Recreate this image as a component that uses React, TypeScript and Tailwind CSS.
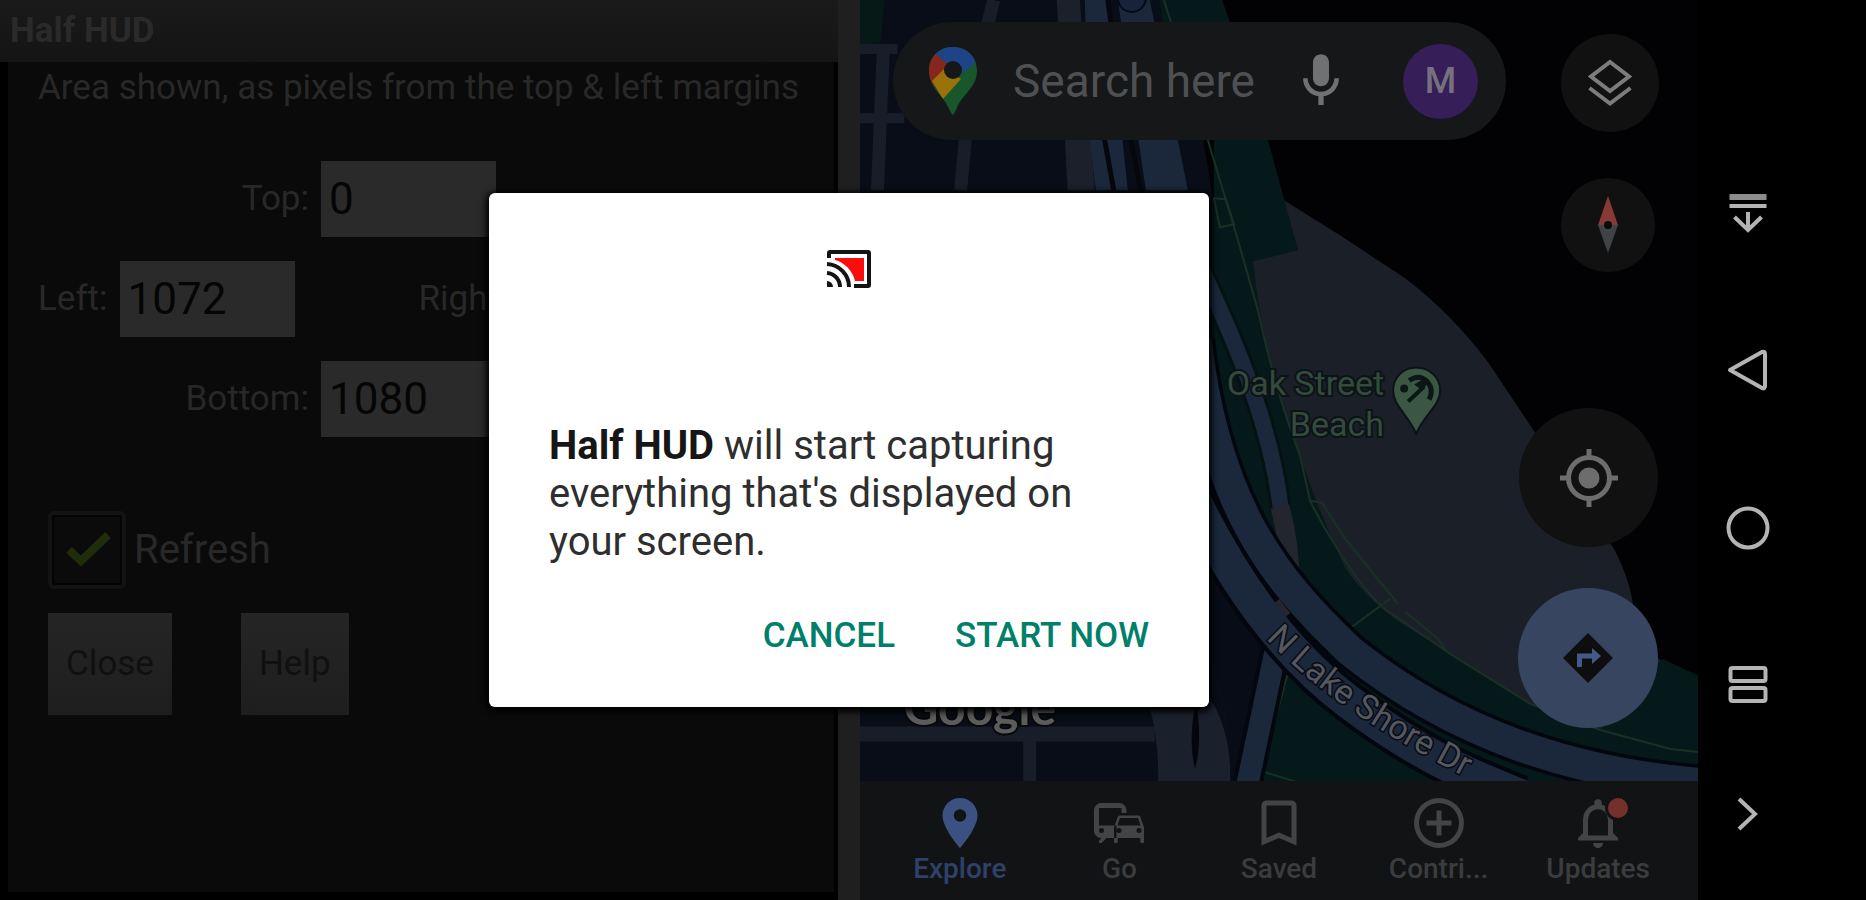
import type { ReactNode } from 'react';

type Tab = {
  label: string;
  icon: ReactNode;
  active?: boolean;
};

const tabs: Tab[] = [
  {
    label: 'Explore',
    active: true,
    icon: (
      <path
        fillRule="evenodd"
        d="M12 2C8.13 2 5 5.13 5 9c0 5.25 7 13 7 13s7-7.75 7-13c0-3.87-3.13-7-7-7zm0 9.5a2.5 2.5 0 0 1 0-5 2.5 2.5 0 0 1 0 5z"
      />
    ),
  },
  {
    label: 'Go',
    icon: (
      <path
        fillRule="evenodd"
        d="M12 4H5C3.34 4 2 5.34 2 7v8c0 1.66 1.34 3 3 3l-1 1v1h1l2-2h4v-5H4V6h9v2h2V7c0-1.66-1.34-3-3-3zM5 14a1 1 0 1 1 0 2 1 1 0 0 1 0-2zm15.57-4.34c-.14-.4-.52-.66-.97-.66h-7.19c-.46 0-.83.26-.98.66L10 13.77V19.5c0 .28.22.5.5.5h.5c.28 0 .5-.22.5-.5V18h9v1.5c0 .28.22.5.5.5h.5c.28 0 .5-.22.5-.5v-5.73l-1.43-4.11zm-8.16.34h7.19l1.03 3h-9.25l1.03-3zM12 16a1 1 0 1 1 0-2 1 1 0 0 1 0 2zm8 0a1 1 0 1 1 0-2 1 1 0 0 1 0 2z"
      />
    ),
  },
  {
    label: 'Saved',
    icon: <path d="M17 3H7c-1.1 0-2 .9-2 2v16l7-3 7 3V5c0-1.1-.9-2-2-2zm0 15-5-2.18L7 18V5h10v13z" />,
  },
  {
    label: 'Contri...',
    icon: (
      <path d="M13 7h-2v4H7v2h4v4h2v-4h4v-2h-4V7zm-1-5a10 10 0 1 0 0 20 10 10 0 0 0 0-20zm0 18a8 8 0 1 1 0-16 8 8 0 0 1 0 16z" />
    ),
  },
  {
    label: 'Updates',
    icon: (
      <>
        <path d="M12 22c1.1 0 2-.9 2-2h-4c0 1.1.9 2 2 2zm6-6v-5c0-3.07-1.63-5.64-4.5-6.32V4a1.5 1.5 0 0 0-3 0v.68C7.64 5.36 6 7.92 6 11v5l-2 2v1h16v-1l-2-2zm-2 1H8v-6c0-2.48 1.51-4.5 4-4.5s4 2.02 4 4.5v6z" />
        <circle cx="20" cy="6" r="5.2" className="fill-[#121315]" />
        <circle cx="20" cy="6" r="4" className="fill-[#74302a]" />
      </>
    ),
  },
];

const fieldClass =
  'h-[76px] w-[175px] bg-[#2a2a2a] px-2 text-[44px] leading-none text-[#050505] outline-none';

function Field({ id, label, value }: { id: string; label: string; value: string }) {
  return (
    <div className="flex items-center gap-3">
      <label htmlFor={id}>{label}</label>
      <input id={id} type="text" defaultValue={value} className={fieldClass} />
    </div>
  );
}

function SettingsPane() {
  return (
    <section className="flex min-w-0 flex-col bg-black">
      <h1 className="bg-linear-to-b from-[#1a1a1a] to-[#141414] px-[10px] py-3 text-[35px] leading-[38px] font-bold text-[#2a2a2a]">
        Half HUD
      </h1>
      <div className="mr-1 mb-2 ml-2 flex-1 bg-[#0a0a0a] pl-[30px] text-[35px] leading-9 text-[#282828]">
        <p className="pt-2 whitespace-nowrap">Area shown, as pixels from the top &amp; left margins</p>
        <div className="mt-[55px] flex w-[458px] flex-col gap-6">
          <div className="flex justify-end">
            <Field id="top" label="Top:" value="0" />
          </div>
          <div className="flex w-[720px] gap-[124px]">
            <Field id="left" label="Left:" value="1072" />
            <Field id="right" label="Right:" value="1920" />
          </div>
          <div className="flex justify-end">
            <Field id="bottom" label="Bottom:" value="1080" />
          </div>
        </div>
        <div className="mt-[74px] ml-[10px] flex items-center gap-2">
          <span className="relative flex size-[78px]">
            <input
              id="refresh"
              type="checkbox"
              defaultChecked
              className="size-full appearance-none rounded-md border-4 border-[#131313] bg-[#0b0b0c] outline-2 -outline-offset-6 outline-[#040404]"
            />
            <svg viewBox="0 0 78 78" className="pointer-events-none absolute inset-0 size-full">
              <path d="M21 39 33 50 60 24" fill="none" stroke="#202d0a" strokeWidth="8" />
            </svg>
          </span>
          <label htmlFor="refresh" className="text-[40px]">
            Refresh
          </label>
        </div>
        <div className="mt-6 ml-[10px] flex gap-[69px] text-[#101010]">
          <button type="button" className="h-[102px] bg-linear-to-b from-[#252525] to-[#1e1e1e] px-[18px]">
            Close
          </button>
          <button type="button" className="h-[102px] bg-linear-to-b from-[#252525] to-[#1e1e1e] px-[18px]">
            Help
          </button>
        </div>
      </div>
    </section>
  );
}

function MapCanvas() {
  return (
    <svg
      viewBox="860 0 838 780"
      preserveAspectRatio="xMidYMid slice"
      className="absolute inset-0 size-full"
      fill="none"
    >
      <rect x="860" width="838" height="782" fill="#020204" />
      {/* city blocks */}
      <path d="M860 0H1180L1230 300 1300 600 1500 782H860Z" fill="#080d17" />
      <path d="M860 0H885L881 42 860 46Z" fill="#071916" />
      {/* beach */}
      <path
        d="M1240 190 1284 200 1340 235 1405 278Q1450 312 1488 362L1530 425 1560 470 1613 547Q1636 590 1634 630L1662 662 1640 740H1500L1300 600 1240 300Z"
        fill="#1a1f28"
      />
      {/* lakefront park */}
      <path
        d="M1160 0H1222L1250 75 1268 140 1298 250 1253 261 1258 300Q1272 385 1300 455 1318 510 1345 567 1365 597 1400 622L1450 653 1530 703 1600 728 1662 658 1698 675V782H1440L1300 620 1214 420V140H1180Z"
        fill="#06191a"
      />
      <path
        d="M1164 0 1172 25 1208 140 1238 240 1258 310Q1275 390 1300 455L1310 500Q1322 525 1345 560 1365 590 1383 607L1450 653 1530 703 1600 729 1670 748 1698 751M1310 500 1322 502 1345 538 1383 585 1398 603M1405 611 1438 638 1446 650M1352 626 1390 598M1214 198 1226 199 1234 224 1220 227Z"
        stroke="#1a3024"
        strokeWidth="2"
      />
      {/* street grid */}
      <g stroke="#181e29">
        <path d="M860 49H898M860 118H905" strokeWidth="10" />
        <path d="M884 44 878 190M994 0 988 25M966 135 961 190" strokeWidth="13" />
        <path d="M860 733H1155" strokeWidth="15" />
        <path d="M1030 738V782" strokeWidth="13" />
      </g>
      <path d="M1057 0H1080L1095 190H1068Z" fill="#1b202b" />
      <path d="M1085 0H1108L1128 190H1096L1090 140Z" fill="#1b273b" />
      <path d="M1118 0H1150L1188 190H1146Z" fill="#1b273b" />
      <path d="M1104 135 1114 190M1130 135 1142 195M1108 0 1111 22" stroke="#05070d" strokeWidth="5" />
      <circle cx="1132" cy="-2" r="14" fill="#16233a" stroke="#070a14" strokeWidth="2" />
      <path d="M1148 700H1212Q1232 735 1230 782H1158Q1160 740 1148 700Z" fill="#1a212d" />
      <path d="M1196 700Q1188 740 1195 768 1203 740 1196 700Z" fill="#04060c" />
      <path d="M1214 570 1280 655 1236 782H1231Q1232 710 1214 660Z" fill="#070c16" />
      {/* green wedge under the drive */}
      <path d="M1289 664 1258 782H1470L1380 735Z" fill="#06191a" />
      <path d="M1289 668 1261 770 1300 782" stroke="#16321f" strokeWidth="2" />
      {/* ramps */}
      <path d="M1276 648 1246 790" stroke="#04070e" strokeWidth="30" />
      <path d="M1276 648 1246 790" stroke="#1b273b" strokeWidth="22" />
      <path d="M1202 270C1240 350 1272 430 1281 510" stroke="#051211" strokeWidth="22" />
      <path d="M1202 270C1240 350 1272 430 1281 510" stroke="#1b273b" strokeWidth="16" />
      <path d="M1280 506Q1290 545 1290 580" stroke="#24262d" strokeWidth="19" />
      {/* N Lake Shore Dr carriageways */}
      <path
        d="M1196 340C1215 500 1270 575 1350 650 1450 730 1570 775 1720 784"
        stroke="#03060c"
        strokeWidth="38"
      />
      <path
        d="M1180 470C1225 570 1280 650 1350 702 1420 755 1470 775 1520 795"
        stroke="#03060c"
        strokeWidth="42"
      />
      <path
        d="M1196 340C1215 500 1270 575 1350 650 1450 730 1570 775 1720 784"
        stroke="#1b273b"
        strokeWidth="31"
      />
      <path
        d="M1180 470C1225 570 1280 650 1350 702 1420 755 1470 775 1520 795"
        stroke="#1b273b"
        strokeWidth="34"
      />
      <path d="M1277 600 1288 614" stroke="#24262d" strokeWidth="6" />
      <path id="drive" d="M1266 638C1310 684 1370 730 1500 794" />
      <text
        fill="#55575e"
        stroke="#080b14"
        strokeWidth="3"
        paintOrder="stroke"
        fontSize="34"
        fontFamily="Roboto, sans-serif"
      >
        <textPath href="#drive">N Lake Shore Dr</textPath>
      </text>
      <g
        fill="#344a3c"
        stroke="#0c1316"
        strokeWidth="4"
        paintOrder="stroke"
        fontSize="34"
        fontFamily="Roboto, sans-serif"
        textAnchor="end"
      >
        <text x="1384" y="394">
          Oak Street
        </text>
        <text x="1384" y="435">
          Beach
        </text>
      </g>
      <path
        d="M1416 367c-13 0-23 10-23 23 0 15 14 23 23 43 9-20 24-28 24-43 0-13-11-23-24-23z"
        fill="#3b5744"
        stroke="#0c1316"
        strokeWidth="2"
      />
      {/* beach umbrella */}
      <path d="M1408 401 1424 386" stroke="#0c1715" strokeWidth="4" />
      <path d="M1409 380Q1419 373 1427 381 1434 389 1429 399" stroke="#0c1715" strokeWidth="5" />
      <path d="M1414 384 1424 378 1428 382 1422 390" fill="#0c1715" />
      <circle cx="1404" cy="388" r="4" fill="#0c1715" />
      <text
        x="904"
        y="724"
        fill="#5c5c5c"
        stroke="#08090c"
        strokeWidth="4"
        paintOrder="stroke"
        fontSize="48"
        fontWeight="700"
        fontFamily="Lato, sans-serif"
      >
        Google
      </text>
    </svg>
  );
}

function MapPane() {
  return (
    <section className="flex min-w-0 flex-col">
      <div className="relative flex-1 overflow-hidden">
        <MapCanvas />
        <div className="relative flex justify-between gap-12 pt-[22px] pr-[39px] pl-[33px]">
          <div className="flex h-[118px] max-w-[613px] flex-1 items-center rounded-full bg-[#161718] pr-7 pl-9">
            <svg viewBox="0 0 48 68" className="h-[68px] w-12 shrink-0">
              <defs>
                <clipPath id="pin">
                  <path d="M24 0C10 0 0 10 0 24c0 12 8 20 14 28 5 6 8 15 10 16 2-1 4-10 9-16 7-9 15-16 15-28C48 10 38 0 24 0z" />
                </clipPath>
              </defs>
              <g clipPath="url(#pin)">
                <path d="M0 0h48v68H0z" fill="#17572b" />
                <path d="M0 0H48V14L24 34 4 8Z" fill="#1c4486" />
                <path d="M0 4 8 8 24 22 4 40-4 30Z" fill="#86261f" />
                <path d="M3 34 16 21 32 32 14 52Z" fill="#99720a" />
              </g>
              <circle cx="24" cy="23" r="9" fill="#161718" />
            </svg>
            <input
              type="text"
              aria-label="Search here"
              placeholder="Search here"
              className="ml-9 w-0 flex-1 text-[46px] text-[#4f5052] outline-none placeholder:text-[#4f5052]"
            />
            <button type="button" aria-label="Voice search" className="mr-[50px] shrink-0">
              <svg viewBox="0 0 24 24" className="size-16 fill-[#707173]">
                <path d="M12 14c1.66 0 3-1.34 3-3V5c0-1.66-1.34-3-3-3S9 3.34 9 5v6c0 1.66 1.34 3 3 3zm5-3a5 5 0 0 1-10 0H5.3a6.7 6.7 0 0 0 5.7 6.72V21h2v-3.28A6.7 6.7 0 0 0 18.7 11H17z" />
              </svg>
            </button>
            <button
              type="button"
              className="size-[75px] shrink-0 rounded-full bg-[#361e58] text-[36px] font-medium text-[#77717f]"
            >
              M
            </button>
          </div>
          <div className="flex flex-col gap-[46px] pt-3">
            <button
              type="button"
              aria-label="Layers"
              className="flex size-[98px] items-center justify-center rounded-full bg-[#111112]"
            >
              <svg viewBox="0 0 44 48" className="h-12 w-11 fill-none stroke-[#7b7c7e] stroke-[4]">
                <path d="M22 3 41 17.5 22 32 3 17.5Z" />
                <path d="M1.5 29 22 44.5 42.5 29" />
              </svg>
            </button>
            <button
              type="button"
              aria-label="Compass"
              className="flex size-[94px] items-center justify-center rounded-full bg-[#111112]"
            >
              <svg viewBox="0 0 24 60" className="h-[60px] w-6">
                <path d="M12 1 22 30H2Z" fill="#863a33" />
                <path d="M2 30H22L12 58Z" fill="#3f4346" />
                <circle cx="12" cy="30" r="4" fill="#0b0b0c" />
              </svg>
            </button>
          </div>
        </div>
        <div className="relative mt-[136px] flex flex-col items-end gap-[41px] pr-10">
          <button
            type="button"
            aria-label="My location"
            className="flex size-[139px] items-center justify-center rounded-full bg-[#111112]"
          >
            <svg viewBox="0 0 58 58" className="size-[58px]">
              <circle cx="29" cy="29" r="20.5" fill="none" stroke="#6d6d6e" strokeWidth="5" />
              <circle cx="29" cy="29" r="10.5" fill="#6d6d6e" />
              <path d="M29 0V9M29 49V58M0 29H9M49 29H58" stroke="#6d6d6e" strokeWidth="5" />
            </svg>
          </button>
          <button
            type="button"
            aria-label="Directions"
            className="flex size-[140px] items-center justify-center rounded-full bg-[#384560]"
          >
            <svg viewBox="0 0 50 50" className="size-[50px]">
              <path d="M25 0 50 25 25 50 0 25Z" fill="#0f0e0f" />
              <path d="M16.5 34V23H32" fill="none" stroke="#435a86" strokeWidth="5" />
              <path d="M29 15 38 23 29 31Z" fill="#435a86" />
            </svg>
          </button>
        </div>
      </div>
      <nav className="grid h-[119px] grid-cols-5 bg-[#121315] px-5">
        {tabs.map((tab) => (
          <a
            key={tab.label}
            href="#"
            className={`flex flex-col items-center pt-3 text-[28px] leading-8 font-medium ${
              tab.active ? 'text-[#2e4169]' : 'text-[#3b3c3e]'
            }`}
          >
            <svg
              viewBox="0 0 24 24"
              className={`size-[60px] overflow-visible ${tab.active ? 'fill-[#3a5182]' : 'fill-[#434446]'}`}
            >
              {tab.icon}
            </svg>
            {tab.label}
          </a>
        ))}
      </nav>
    </section>
  );
}

const systemKeys = [
  {
    label: 'Hide navigation bar',
    icon: (
      <>
        <path d="M3.5 7H40.500" strokeWidth="6" className="stroke-[#8c8c8c]" />
        <path d="M3.5 16H40.500M22 22V38M8.500 27 22 40 35.500 27" />
      </>
    ),
  },
  { label: 'Back', icon: <path strokeLinejoin="round" d="M4 22 36 4Q39 3 39 6V38Q39 41 36 40Z" /> },
  { label: 'Home', icon: <circle cx="22" cy="22" r="19.5" /> },
  {
    label: 'Split screen',
    icon: (
      <>
        <rect x="4.5" y="4" width="35" height="13" rx="2" />
        <rect x="4.5" y="24" width="35" height="13" rx="2" />
      </>
    ),
  },
];

function SystemBar() {
  return (
    <aside className="flex flex-col items-start gap-[114px] bg-black pt-[190px] pl-7">
      {systemKeys.map((key) => (
        <button key={key.label} type="button" aria-label={key.label}>
          <svg viewBox="0 0 44 44" className="size-11 fill-none stroke-[#b4b4b4] stroke-[4]">
            {key.icon}
          </svg>
        </button>
      ))}
      <button type="button" aria-label="Expand" className="-mt-[30px]">
        <svg viewBox="0 0 44 44" className="size-11 fill-none stroke-[#b4b4b4] stroke-[4]">
          <path d="M13 7 29 22 13 37" />
        </svg>
      </button>
    </aside>
  );
}

function CaptureDialog() {
  return (
    <div
      role="dialog"
      aria-modal="true"
      aria-label="Half HUD"
      className="w-[720px] max-w-full rounded-md bg-white px-[60px] pt-14 pb-[49px] shadow-[0_2px_6px_3px_#000000]"
    >
      <svg viewBox="0 0 46 40" className="mx-auto h-10 w-[46px] fill-none stroke-[#141414] stroke-[4]">
        <path d="M9 9H38V32H29C27 22 18 13 9 11Z" className="fill-[#fb0d0d] stroke-none" />
        <path d="M3 9V4Q3 3 4 3H42Q43 3 43 4V36Q43 37 42 37H28" />
        <path d="M1 15A23 23 0 0 1 23 38M1 24A14 14 0 0 1 14 38" />
        <path d="M1 32A6 6 0 0 1 7 38H1Z" className="fill-[#141414] stroke-none" />
      </svg>
      <p className="mt-[133px] text-[40px] leading-12 text-[#2e2e2e]">
        <strong className="font-bold text-[#161616]">Half HUD</strong> will start capturing everything
        that&apos;s displayed on your screen.
      </p>
      <div className="mt-12 flex justify-end gap-[60px] text-[35px] leading-[44px] font-medium text-[#00806a]">
        <button type="button">CANCEL</button>
        <button type="button">START NOW</button>
      </div>
    </div>
  );
}

export default function App() {
  return (
    <main className="grid min-h-screen grid-cols-[1fr_168px] overflow-hidden bg-black font-[Roboto,sans-serif]">
      <div className="relative grid grid-cols-[minmax(0,1fr)_22px_minmax(0,1fr)] bg-[#1f1f1f]">
        <SettingsPane />
        <div />
        <MapPane />
        <div className="absolute inset-0 flex items-center justify-center">
          <CaptureDialog />
        </div>
      </div>
      <SystemBar />
    </main>
  );
}
